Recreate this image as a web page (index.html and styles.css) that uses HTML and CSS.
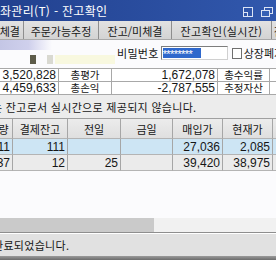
FILE: index.html
```html
<!DOCTYPE html>
<html lang="ko">
<head>
<meta charset="utf-8">
<link rel="stylesheet" href="styles.css">
</head>
<body>
<div class="win">
  <div class="titlebar">
    <span class="title">좌관리(T) - 잔고확인</span>
    <span class="tbtns">
      <svg width="10" height="10" viewBox="0 0 10 10"><rect x="0.5" y="0.5" width="9" height="9" fill="none" stroke="#dbe4f5"/><rect x="0.5" y="5.5" width="4" height="4" fill="none" stroke="#dbe4f5"/><path d="M5 0.5H9.5V4" fill="none" stroke="#dbe4f5"/></svg>
      <svg width="12" height="10" viewBox="0 0 12 10"><rect x="3.5" y="0.5" width="8" height="6" fill="none" stroke="#dbe4f5"/><rect x="0.5" y="3.5" width="8" height="6" fill="#3560b5" stroke="#dbe4f5"/></svg>
    </span>
  </div>
  <div class="tabs">
    <div class="tab t1">체결</div>
    <div class="tab t2">주문가능추정</div>
    <div class="tab t3">잔고/미체결</div>
    <div class="tab t4">잔고확인(실시간)</div>
    <div class="tab t5">잔고</div>
  </div>
  <div class="panel">
    <div class="deco">
      <div class="strip"></div>
      <div class="chips"><span class="chip c1"></span><span class="chip c2"></span><span class="chip c3"></span></div>
    </div>
    <div class="pw">
      <span class="lbl">비밀번호</span>
      <span class="input"><span class="sel">********</span></span>
      <span class="chk"></span>
      <span class="lbl">상장폐지</span>
    </div>
  </div>
  <div class="summary">
    <div class="c num">3,520,828</div><div class="c lab">총평가</div><div class="c num">1,672,078</div><div class="c lab">총수익률</div><div class="c num"></div>
    <div class="c num">4,459,633</div><div class="c lab">총손익</div><div class="c num">-2,787,555</div><div class="c lab">추정자산</div><div class="c num"></div>
  </div>
  <div class="notice">는 잔고로서 실시간으로 제공되지 않습니다.</div>
  <div class="grid">
    <div class="h">수량</div><div class="h">결제잔고</div><div class="h">전일</div><div class="h">금일</div><div class="h">매입가</div><div class="h">현재가</div><div class="h"></div>
    <div class="d r1">11</div><div class="d r1">111</div><div class="d r1"></div><div class="d r1"></div><div class="d r1">27,036</div><div class="d r1">2,085</div><div class="d r1"></div>
    <div class="d r2">37</div><div class="d r2">12</div><div class="d r2">25</div><div class="d r2"></div><div class="d r2">39,420</div><div class="d r2">38,975</div><div class="d r2"></div>
  </div>
  <div class="blank"></div>
  <div class="hscroll"><div class="thumb"></div><div class="track"></div></div>
  <div class="status"><span class="msg">완료되었습니다.</span></div>
  <div class="bottom"></div>
</div>
</body>
</html>
```

FILE: styles.css
```css
* { box-sizing: border-box; margin: 0; padding: 0; }
html, body { width: 276px; height: 260px; overflow: hidden; background: #fbfbfd; }
body { font-family: "Noto Sans CJK KR", "Liberation Sans", sans-serif; font-size: 11px; color: #161616; }
.win { display: flex; flex-direction: column; width: 276px; height: 260px; overflow: hidden; }

.titlebar { flex: none; height: 21px; display: flex; align-items: center; justify-content: space-between; padding-right: 3px; background: linear-gradient(90deg, #22418f, #3158ad); color: #fff; }
.title { font-size: 12px; line-height: 14px; white-space: nowrap; letter-spacing: 0.3px; }
.tbtns { display: flex; align-items: center; gap: 8px; padding-top: 2px; }

.tabs { flex: none; height: 19px; display: flex; background: linear-gradient(#e2e2e2, #d3d3d3); border-bottom: 1px solid #a9a9a9; overflow: hidden; }
.tab { flex: none; display: flex; align-items: center; justify-content: center; white-space: nowrap; overflow: hidden; border-right: 1px solid #8e8e8e; line-height: 14px; padding-top: 1px; }
.t1 { width: 24px; justify-content: flex-end; padding-right: 3px; }
.t2 { width: 75px; }
.t3 { width: 73px; }
.t4 { width: 100px; letter-spacing: 0.4px; }
.t5 { width: 30px; justify-content: flex-start; padding-left: 2px; border-right: none; }

.panel { flex: none; height: 28px; display: flex; background: #fbfbfd; }
.deco { width: 115px; display: flex; flex-direction: column; }
.strip { height: 10px; width: 52px; background: linear-gradient(90deg, #c4c6e5, #cfd0ec 55%, #e8e8f6 80%, #fbfbfd); }
.chips { display: flex; height: 9px; margin-top: 5px; }
.chip { display: block; height: 9px; }
.c1 { width: 6px; margin-left: 30px; background: #5d5c4a; }
.c2 { width: 6px; margin-left: 11px; background: #d9d9d1; }
.c3 { width: 60px; margin-left: 2px; background: #f8f8df; }
.pw { display: flex; align-items: center; height: 18px; margin-top: 4px; white-space: nowrap; }
.lbl { line-height: 14px; }
.pw .lbl:first-child { margin-left: 2px; letter-spacing: 0.3px; }
.input { display: flex; align-items: center; width: 67px; height: 14px; margin-left: 2px; background: #fff; border: 1px solid #7d7d7d; border-right-color: #d0d0d0; border-bottom-color: #d0d0d0; padding-left: 1px; }
.sel { display: block; height: 10px; width: 38px; background: #2f68cc; color: #fff; font-family: "Liberation Sans", sans-serif; font-size: 11px; line-height: 12px; letter-spacing: -0.6px; overflow: hidden; }
.chk { display: block; width: 10px; height: 11px; margin-left: 4px; margin-right: 2px; background: #fff; border: 1px solid #6f6f6f; }

.summary { flex: none; display: grid; grid-template-columns: 99px 53px 106px 52px 40px; margin-left: -40px; border-top: 1px solid #a8a8a8; }
.c { height: 13px; border-right: 1px solid #a8a8a8; border-bottom: 1px solid #a8a8a8; line-height: 12px; background: #fff; white-space: nowrap; }
.num { text-align: right; padding-right: 2px; font-family: "Liberation Sans Narrow", "Liberation Sans", sans-serif; font-size: 12px; }
.lab { text-align: center; font-size: 10.5px; }

.notice { flex: none; height: 23px; display: flex; align-items: center; background: #ececec; white-space: nowrap; margin-left: -8px; padding-top: 1px; letter-spacing: 0.3px; }

.grid { flex: none; display: grid; grid-template-columns: 28px 55px 53px 52px 50px 50px 30px; grid-template-rows: 20px 16px 16px; margin-left: -15px; border-top: 1px solid #a0a0a0; }
.h, .d { border-right: 1px solid #a6a6a6; border-bottom: 1px solid #b4b4b4; white-space: nowrap; display: flex; align-items: center; }
.h { justify-content: center; background: linear-gradient(#ececec, #dfdfdf); line-height: 14px; }
.d { justify-content: flex-end; padding-right: 2px; font-family: "Liberation Sans Narrow", "Liberation Sans", sans-serif; font-size: 12px; line-height: 14px; }
.r1 { background: #cde5f4; }
.r2 { background: #ebebeb; }

.blank { flex: 1; background: #fbfbfd; }
.hscroll { flex: none; height: 14px; display: flex; }
.thumb { width: 154px; background: #cacaca; }
.track { flex: 1; background: #f1f1f1; }
.status { flex: none; height: 24px; display: flex; align-items: center; background: #e1e1e1; border-top: 1px solid #8e8e8e; box-shadow: inset 0 1px 0 #ffffff; white-space: nowrap; }
.msg { margin-left: -7px; line-height: 14px; letter-spacing: 0.3px; }
.bottom { flex: none; height: 4px; background: linear-gradient(#9a9a9a, #6c6c6c); }
```
